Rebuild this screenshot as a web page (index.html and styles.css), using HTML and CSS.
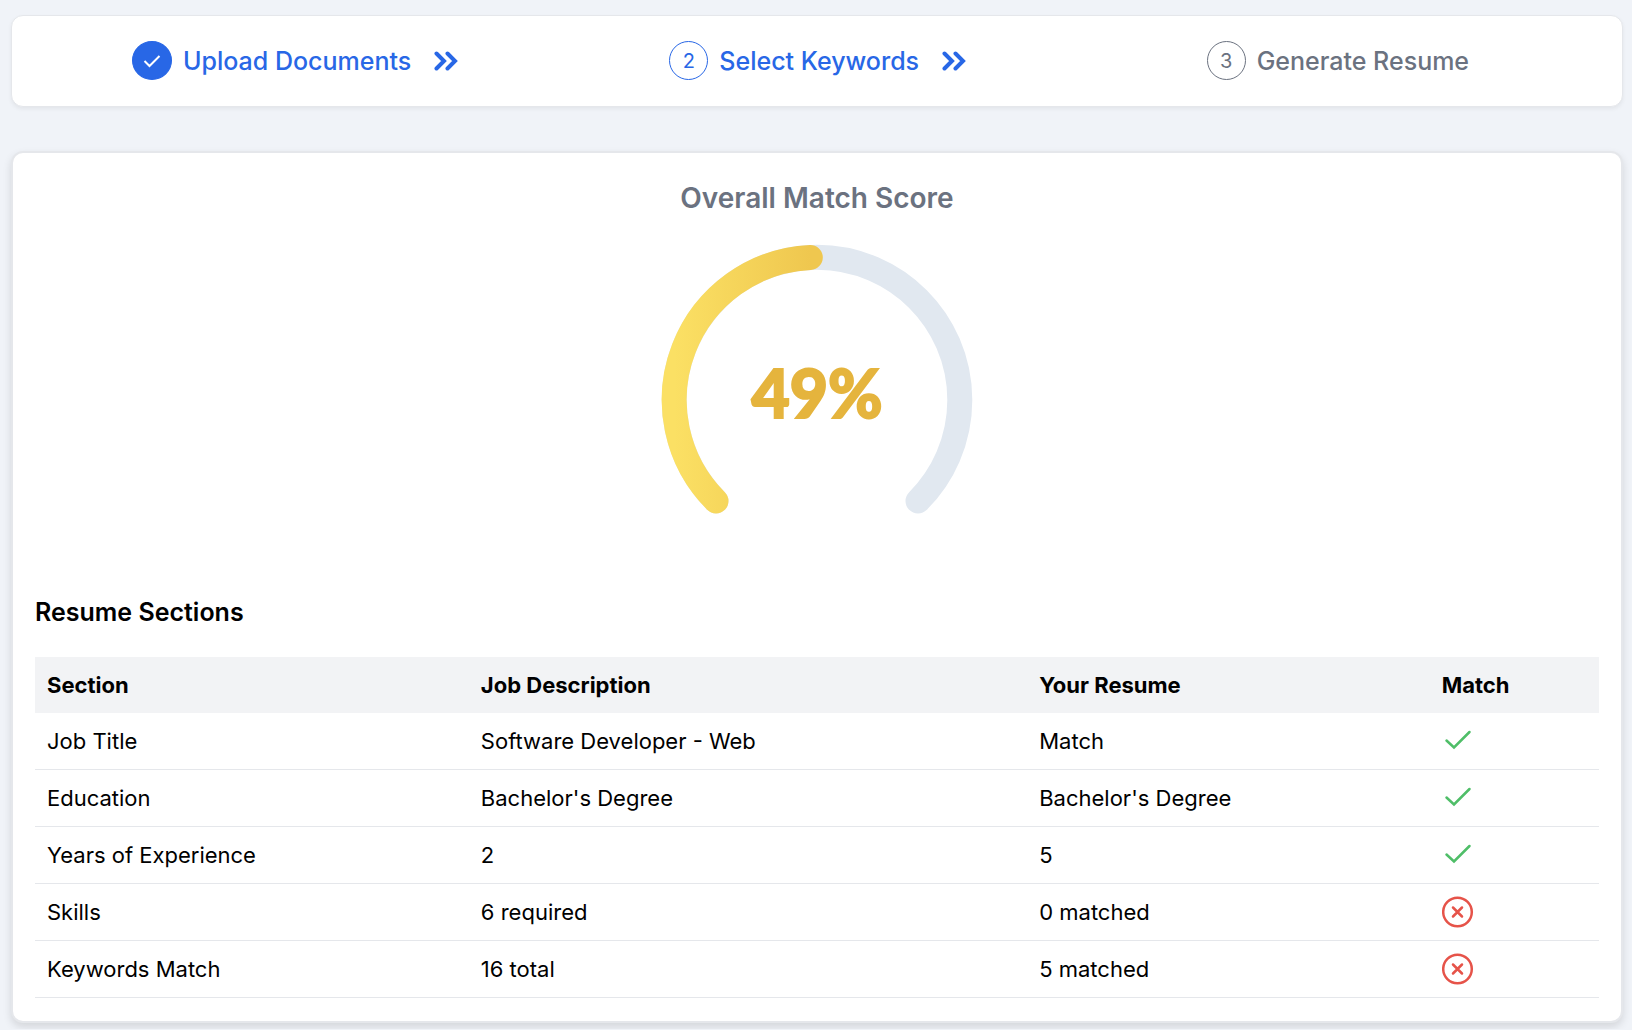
FILE: index.html
```html
<!DOCTYPE html>
<html lang="en">
<head>
<meta charset="utf-8">
<meta name="viewport" content="width=device-width, initial-scale=1">
<title>Resume Match</title>
<link rel="stylesheet" href="styles.css">
</head>
<body>
<svg class="sprite" aria-hidden="true">
  <symbol id="chevrons" viewBox="0 0 24 20">
    <path d="M2.5 2.5 10 10l-7.500 7.500M13.500 2.500 21 10l-7.500 7.500"/>
  </symbol>
  <symbol id="check" viewBox="0 0 32 32">
    <path d="M4.500 15.500l7.500 7L27.500 7"/>
  </symbol>
  <symbol id="cross" viewBox="0 0 32 32">
    <circle cx="15.500" cy="16" r="14.300"/>
    <path d="M11 11.500l9 9M20 11.500l-9 9"/>
  </symbol>
</svg>
<nav class="stepper" aria-label="Progress">
  <ol class="steps">
    <li class="step step-active">
      <span class="badge badge-done"><svg class="badge-icon" viewBox="0 0 18 14"><path d="M1.500 7l5 5L16.500 2"/></svg></span>
      <span class="step-label">Upload Documents</span>
      <svg class="chevrons"><use href="#chevrons"/></svg>
    </li>
    <li class="step step-active">
      <span class="badge">2</span>
      <span class="step-label">Select Keywords</span>
      <svg class="chevrons"><use href="#chevrons"/></svg>
    </li>
    <li class="step">
      <span class="badge">3</span>
      <span class="step-label">Generate Resume</span>
    </li>
  </ol>
</nav>
<main class="card">
  <section class="score">
    <h1 class="score-title">Overall Match Score</h1>
    <div class="gauge">
      <svg class="gauge-ring" viewBox="0 0 312 312" aria-hidden="true">
        <defs>
          <linearGradient id="gold">
            <stop offset="0" stop-color="#fbe064"/>
            <stop offset="1" stop-color="#efc74f"/>
          </linearGradient>
        </defs>
        <path class="track" d="M55 257A142.800 142.800 0 1 1 257 257"/>
        <path class="value" stroke="url(#gold)" d="M55 257A142.800 142.800 0 0 1 149.300 13.400"/>
      </svg>
      <span class="gauge-text">49%</span>
    </div>
  </section>
  <section class="sections">
    <h2 class="sections-title">Resume Sections</h2>
    <table class="table">
      <colgroup><col class="col-section"><col class="col-job"><col class="col-resume"><col></colgroup>
      <thead>
        <tr><th scope="col">Section</th><th scope="col">Job Description</th><th scope="col">Your Resume</th><th scope="col">Match</th></tr>
      </thead>
      <tbody>
        <tr><td>Job Title</td><td>Software Developer - Web</td><td>Match</td><td><svg class="mark mark-yes" role="img" aria-label="Match"><use href="#check"/></svg></td></tr>
        <tr><td>Education</td><td>Bachelor's Degree</td><td>Bachelor's Degree</td><td><svg class="mark mark-yes" role="img" aria-label="Match"><use href="#check"/></svg></td></tr>
        <tr><td>Years of Experience</td><td>2</td><td>5</td><td><svg class="mark mark-yes" role="img" aria-label="Match"><use href="#check"/></svg></td></tr>
        <tr><td>Skills</td><td>6 required</td><td>0 matched</td><td><svg class="mark mark-no" role="img" aria-label="No match"><use href="#cross"/></svg></td></tr>
        <tr><td>Keywords Match</td><td>16 total</td><td>5 matched</td><td><svg class="mark mark-no" role="img" aria-label="No match"><use href="#cross"/></svg></td></tr>
      </tbody>
    </table>
  </section>
</main>
</body>
</html>
```
FILE: styles.css
```css
* {
  box-sizing: border-box;
}

body {
  margin: 0;
  padding: 15px 9px 6px 11px;
  background: #f0f3f8;
  color: #000;
  font-family: Inter, "Liberation Sans", sans-serif;
}

.sprite {
  position: absolute;
  width: 0;
  height: 0;
}

.stepper {
  padding: 25px 0 26px;
  border: 1px solid #e5e7eb;
  border-radius: 12px;
  background: #fff;
  box-shadow: 0 2px 4px rgba(0, 0, 0, 0.06);
}

.steps {
  display: grid;
  grid-template-columns: repeat(3, 1fr);
  gap: 2px;
  margin: 0;
  padding: 0;
  list-style: none;
}

.step {
  display: flex;
  align-items: center;
  gap: 11px;
  padding-left: 120px;
  color: #6b7280;
}

.step-active {
  color: #2867e6;
}

.badge {
  display: flex;
  align-items: center;
  justify-content: center;
  width: 39px;
  height: 39px;
  border: 1px solid currentColor;
  border-radius: 50%;
  font-size: 20px;
}

.badge-done {
  width: 40px;
  background: #2867e6;
}

.badge-icon {
  width: 18px;
  height: 14px;
  fill: none;
  stroke: #fff;
  stroke-width: 2;
}

.step-label {
  font-size: 25px;
  font-weight: 500;
  line-height: 38px;
}

.chevrons {
  width: 24px;
  height: 20px;
  margin-left: 12px;
  fill: none;
  stroke: currentColor;
  stroke-width: 4;
  stroke-linecap: round;
}

.card {
  margin-top: 44px;
  padding: 22px 22px 23px;
  border: 2px solid #e5e7eb;
  border-radius: 12px;
  background: #fff;
  box-shadow: 0 4px 8px rgba(0, 0, 0, 0.12);
}

.score {
  display: flex;
  flex-direction: column;
  align-items: center;
}

.score-title {
  margin: 0;
  color: #6b7280;
  font-size: 28px;
  font-weight: 600;
  line-height: 46px;
}

.gauge {
  display: grid;
  place-items: center;
  width: 312px;
  margin-top: 23px;
}

.gauge-ring,
.gauge-text {
  grid-area: 1 / 1;
}

.gauge-ring {
  width: 100%;
  fill: none;
  stroke-width: 25;
  stroke-linecap: round;
}

.track {
  stroke: #e1e8f0;
}

.gauge-text {
  padding-bottom: 14px;
  color: #e5b43d;
  font-family: "Lato Black", Lato, "Liberation Sans", sans-serif;
  font-size: 66px;
  font-weight: 900;
  line-height: 80px;
  -webkit-text-stroke: 2px currentColor;
}

.sections-title {
  margin: 36px 0 25px;
  font-size: 25px;
  font-weight: 600;
  line-height: 40px;
}

.table {
  width: 100%;
  border-collapse: collapse;
  table-layout: fixed;
  font-size: 22px;
  line-height: 32px;
  text-align: left;
}

.col-section {
  width: 27.74%;
}

.col-job {
  width: 35.7%;
}

.col-resume {
  width: 25.74%;
}

.table th,
.table td {
  padding: 12px;
}

.table th {
  background: #f2f3f5;
  font-weight: 700;
}

.table td {
  border-bottom: 1px solid #e5e7eb;
}

.mark {
  display: block;
  width: 32px;
  height: 32px;
  fill: none;
  stroke-linecap: round;
}

.mark-yes {
  stroke: #4fbe68;
  stroke-width: 2.500;
}

.mark-no {
  stroke: #e65349;
  stroke-width: 2.500;
}
```
